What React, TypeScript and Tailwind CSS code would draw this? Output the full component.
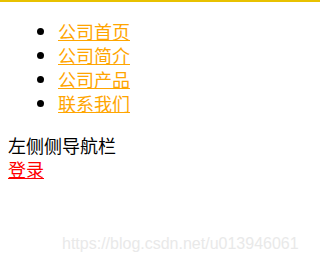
export default function App() {
  const links = ["公司首页", "公司简介", "公司产品", "联系我们"];

  return (
    <div
      className="relative h-[259px] w-full overflow-hidden bg-white border-t-2 border-[#e8c100] px-2 text-[18px] leading-[24px] text-black"
      style={{ fontFamily: '"Noto Sans CJK SC", "Noto Sans", sans-serif' }}
    >
      <ul className="list-disc mt-[17px] mb-[18px] pl-[50px]">
        {links.map((name) => (
          <li key={name}>
            <a href="#" className="text-[#ffa500] underline">
              {name}
            </a>
          </li>
        ))}
      </ul>

      <div>左侧侧导航栏</div>
      <a href="#" className="text-[#ff0000] underline">
        登录
      </a>

      {/* watermark */}
      <div
        className="absolute left-[62px] top-[233px] text-[16px] leading-[18px] text-[#e9e9e9] whitespace-nowrap"
        style={{ fontFamily: '"Liberation Sans", Arial, sans-serif' }}
      >
        https://blog.csdn.net/u013946061
      </div>
    </div>
  );
}
